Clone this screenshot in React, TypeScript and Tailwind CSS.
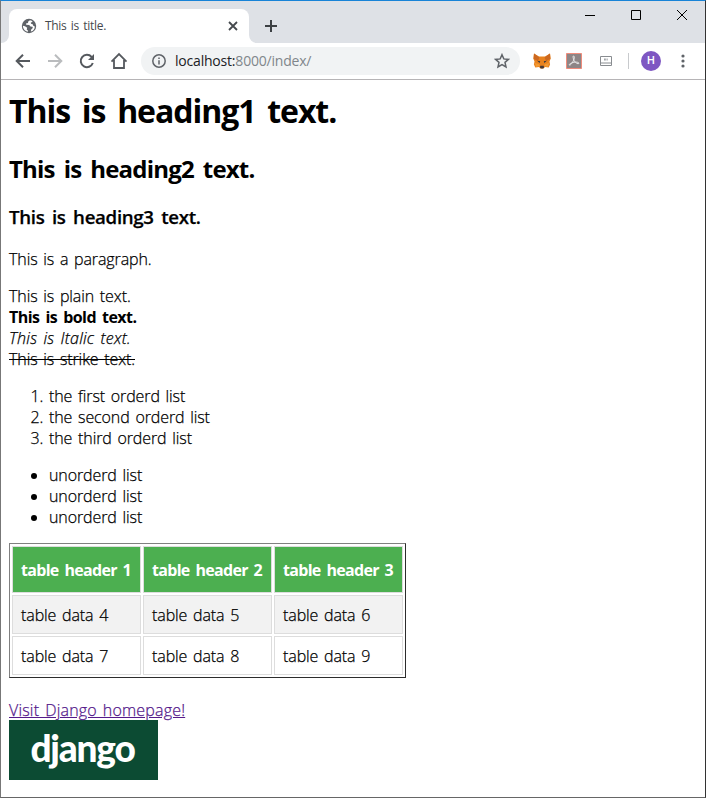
import React from "react";

const rows = [
  ["table data 4", "table data 5", "table data 6"],
  ["table data 7", "table data 8", "table data 9"],
];

function Globe() {
  return (
    <svg viewBox="0 0 16 16" className="ml-3 size-4 shrink-0">
      <circle cx="8" cy="8" r="7.2" fill="#5f6368" />
      <path d="M9 2.200 7.200 3.600 7 5 5 5.600l.2 1.200 3 .2L9.500 8.500l2 .2.300 1.400-1.600 1.400-.4 2.100c2.500-.7 4.100-2.800 4-5.200l-1.500-.6-.6-1.600-1.700-.4L9.800 4.600l1.500-.6V2.900zM1.900 7.800c0 3 2.100 5.500 5 5.900v-1.300L5.700 11.500l.5-1.700L4 8.300z" fill="#fff" />
    </svg>
  );
}

function Toolbar() {
  return (
    <div className="flex h-9 items-center bg-white">
      <svg viewBox="0 0 16 16" className="ml-[14px] size-4 shrink-0" fill="none" stroke="#55595e" strokeWidth="2"><path d="M15 8H2.500M8 1.700 1.700 8 8 14.300" /></svg>
      <svg viewBox="0 0 16 16" className="ml-4 size-4 shrink-0" fill="none" stroke="#babcbe" strokeWidth="2"><path d="M1 8h12.500M8 1.700 14.300 8 8 14.300" /></svg>
      <svg viewBox="0 0 16 16" className="ml-4 size-4 shrink-0" fill="none" stroke="#55595e" strokeWidth="2"><path d="M13.800 10A6.200 6.200 0 1 1 12.600 3.800L14 5.200" /><path d="M15 1v6H9z" fill="#55595e" stroke="none" /></svg>
      <svg viewBox="0 0 18 18" className="ml-[15px] size-[18px] shrink-0" fill="none" stroke="#55595e" strokeWidth="1.8"><path d="M1.500 9.600 9 2l7.500 7.600M4 8v8h10V8" /></svg>
      <div className="ml-[13px] flex h-7 w-[379px] shrink-0 items-center rounded-full bg-[#f1f3f4]">
        <svg viewBox="0 0 14 14" className="ml-[11px] size-[14px]" fill="none" stroke="#5f6368" strokeWidth="1.500"><circle cx="7" cy="7" r="6.200" /><path d="M7 6.200v4.300M7 3.400V5" /></svg>
        <span className="ml-[9px] whitespace-nowrap text-[14px] leading-5 tracking-[-0.200px] text-[#202124]">localhost:<span className="text-[#80868b]">8000/index/</span></span>
        <svg viewBox="0 0 16 16" className="mr-[10px] ml-auto size-4" fill="none" stroke="#5f6368" strokeWidth="1.500"><path d="m8 1.700 1.800 4.200 4.700.5-3.500 3 1 4.600L8 11.600 4 14l1-4.600-3.500-3 4.700-.5z" /></svg>
      </div>
      <svg viewBox="0 0 18 16" className="ml-[13px] h-4 w-[18px] shrink-0">
        <path d="m1 .5 5 3h6l5-3 .7 5-1.200 3 .6 3-1.400 3-3.700-.5-1.500 1.500h-3L6 14l-3.700.5-1.400-3 .6-3L.3 5.500z" fill="#e8821e" />
        <path d="m1 .5 5.500 4L5 8 .7 6zM17 .5l-5.500 4L13 8l4.300-2z" fill="#cc6820" />
        <path d="m4.200 7.800 3 .5-.5 1.700zM13.800 7.800l-3 .5.5 1.700z" fill="#2d3542" />
        <path d="m2 10 4 1 1 2-4 1zM16 10l-4 1-1 2 4 1z" fill="#f39a32" />
        <path d="M7.300 12.700h3.400l.4 1.800-1 .9H7.900l-1-.9z" fill="#493a36" />
      </svg>
      <svg viewBox="0 0 16 16" className="ml-[15px] size-4 shrink-0"><path d="M.5.5h15v15H.5z" fill="#8d8586" stroke="#ef8b7b" /><path d="M7.500 3c1.500 0 .8 3-.4 5.200s-3 4.600-3.700 3.900c-1-1.100 3.400-2.900 5.800-3 2.200-.1 4.200.5 3.600 1.400-.6 1-3.400-.8-4.400-2.400S6.500 3 7.500 3z" fill="none" stroke="#eee" strokeWidth=".9" /></svg>
      <svg viewBox="0 0 12 10" className="ml-[18px] h-[10px] w-3 shrink-0" fill="none" stroke="#888c90"><path d="M.5.5h11v6.500H.5zM.5 7v2.500h11V7" /><path d="M4.500 2.500v2m1.200-2v2m1.500-2v2" strokeWidth=".8" /></svg>
      <span className="ml-4 h-4 w-px bg-[#c8cacd]" />
      <span className="ml-3 flex size-5 items-center justify-center rounded-full bg-[#7e57c2] font-[Roboto] text-[11px] font-medium text-white">H</span>
      <svg viewBox="0 0 4 14" className="ml-5 h-[14px] w-1 shrink-0" fill="#5f6368"><circle cx="2" cy="2" r="1.600" /><circle cx="2" cy="7" r="1.600" /><circle cx="2" cy="12" r="1.600" /></svg>
    </div>
  );
}

function TabStrip() {
  return (
    <div className="flex h-[42px] bg-[#dee1e6]">
      <div className="flex h-full w-2 shrink-0 bg-white"><div className="w-full rounded-br-lg bg-[#dee1e6]" /></div>
      <div className="mt-2 flex h-[34px] w-60 shrink-0 items-center rounded-t-lg bg-white">
        <Globe />
        <span className="ml-2 whitespace-nowrap text-[12px] leading-4 tracking-[-0.300px] text-[#45494d] [word-spacing:1.500px]">This is title.</span>
        <svg viewBox="0 0 10 10" className="mr-[11px] ml-auto size-[10px]" stroke="#45494d" strokeWidth="1.800"><path d="m1 1 8 8M9 1 1 9" /></svg>
      </div>
      <div className="w-2 shrink-0 bg-white"><div className="h-full rounded-bl-lg bg-[#dee1e6]" /></div>
      <svg viewBox="0 0 12 12" className="mt-[19px] ml-2 size-3" stroke="#3c4043" strokeWidth="2"><path d="M6 0v12M0 6h12" /></svg>
      <svg viewBox="0 0 10 10" className="mt-[9px] ml-auto size-[10px]" stroke="#000"><path d="M0 5.500h10" /></svg>
      <svg viewBox="0 0 10 10" className="mt-[9px] ml-9 size-[10px]" fill="none" stroke="#000"><path d="M.5.5h9v9h-9z" /></svg>
      <svg viewBox="0 0 10 10" className="mt-[9px] mr-[18px] ml-9 size-[10px]" stroke="#000"><path d="m0 0 10 10M10 0 0 10" /></svg>
    </div>
  );
}

export default function App() {
  return (
    <div className="h-[798px] w-[706px] overflow-hidden border border-t-[#1883d7] border-r-[#333] border-b-[#666] border-l-[#777] bg-white font-['Open_Sans','Noto_Sans_CJK_KR',sans-serif]">
      <TabStrip />
      <Toolbar />
      <div className="h-px bg-[#b6b4b6]" />
      <main className="px-2 pt-[9px] text-[16px] leading-[21px] font-light tracking-[-0.100px] whitespace-nowrap text-black [-webkit-text-stroke:0.250px] [word-spacing:1.700px]">
        <h1 className="text-[32px] leading-[43px] font-bold tracking-[-1.050px] [-webkit-text-stroke:0] [word-spacing:4.500px]">This is heading1 text.</h1>
        <h2 className="mt-[21px] text-[24px] leading-8 font-bold tracking-[-0.800px] [-webkit-text-stroke:0] [word-spacing:3.500px]">This is heading2 text.</h2>
        <h3 className="mt-[19px] text-[18.700px] leading-[25px] font-semibold tracking-[-0.330px] [word-spacing:3px]">This is heading3 text.</h3>
        <p className="mt-5">This is a paragraph.</p>
        <div className="mt-4">
          <div>This is plain text.</div>
          <div className="font-bold tracking-[-0.550px] [-webkit-text-stroke:0] [word-spacing:2.400px]">This is bold text.</div>
          <div className="tracking-[0.250px] italic">This is Italic text.</div>
          <div><s>This is strike text.</s></div>
        </div>
        <ol className="mt-4 list-decimal pl-10">
          <li>the first orderd list</li>
          <li>the second orderd list</li>
          <li>the third orderd list</li>
        </ol>
        <ul className="mt-4 list-disc pl-10">
          <li>unorderd list</li>
          <li>unorderd list</li>
          <li>unorderd list</li>
        </ul>
        <table className="mt-[15px] w-[397px] table-fixed border-separate border-spacing-[2px] border border-t-[#808080] border-r-[#2c2c2c] border-b-[#2c2c2c] border-l-[#808080]">
          <thead>
            <tr>
              {["table header 1", "table header 2", "table header 3"].map((t) => (
                <th key={t} className="h-[47px] border border-[#ddd] bg-[#4caf50] px-2 pt-px pb-0 text-left font-bold tracking-[-0.700px] text-white [-webkit-text-stroke:0] [word-spacing:2.400px]">{t}</th>
              ))}
            </tr>
          </thead>
          <tbody>
            {rows.map((r) => (
              <tr key={r[0]} className="odd:bg-[#f2f2f2]">
                {r.map((t) => <td key={t} className="h-[39px] border border-[#ddd] px-2 pt-px pb-0">{t}</td>)}
              </tr>
            ))}
          </tbody>
        </table>
        <a className="mt-[21px] block w-fit pt-[2px] leading-[19px] tracking-[0.180px] text-[#551a8b] underline">Visit Django homepage!</a>
        <div className="flex h-[60px] w-[149px] justify-center bg-[#0c4b33] pr-[2px] font-[Lato] text-[37px] leading-[56px] font-black tracking-[-1.200px] text-white [-webkit-text-stroke:0]">django</div>
      </main>
    </div>
  );
}
